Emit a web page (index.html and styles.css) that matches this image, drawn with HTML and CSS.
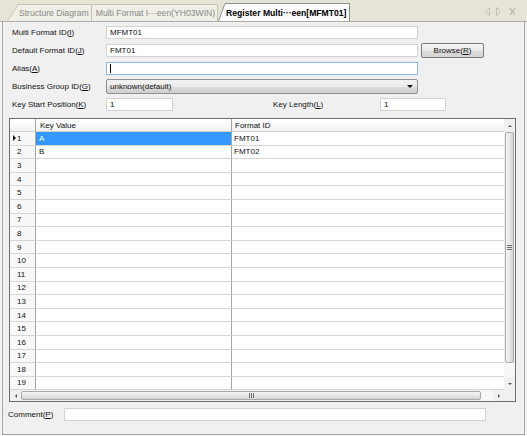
FILE: index.html
```html
<!DOCTYPE html>
<html>
<head>
<meta charset="utf-8">
<link rel="stylesheet" href="styles.css">
</head>
<body>
<div class="window">
  <div class="tabbar">
    <div class="tabs">
      <div class="tab">
        <svg class="slant" width="11" height="17" viewBox="0 0 11 17"><polygon points="0,17 11,0 11,17" fill="#efeee7"/><line x1="0.5" y1="17" x2="11" y2="0.5" stroke="#c4c2b6" stroke-width="1"/></svg>
        <div class="tab-body tab-first">Structure Diagram</div>
      </div>
      <div class="tab">
        <div class="tab-body tab-second">Multi Format I···een(YH03WIN)</div>
      </div>
      <div class="tab tab-active">
        <svg class="slant" width="7" height="18" viewBox="0 0 7 18"><polygon points="0,18 7,0 7,18" fill="#fbfbfb"/><line x1="0.5" y1="18" x2="7" y2="0.5" stroke="#8f8f8f" stroke-width="1"/></svg>
        <div class="tab-body">Register Multi···een[MFMT01]</div>
      </div>
    </div>
    <div class="tabctl">
      <svg width="34" height="11" viewBox="0 0 34 11">
        <polygon points="5.5,1.5 1.5,5.5 5.5,9.5" fill="none" stroke="#c2c0b6" stroke-width="1"/>
        <polygon points="12.5,1.5 16.5,5.5 12.5,9.5" fill="none" stroke="#c2c0b6" stroke-width="1"/>
        <line x1="26" y1="2" x2="31" y2="9" stroke="#b4b2a8" stroke-width="1.1"/>
        <line x1="31" y1="2" x2="26" y2="9" stroke="#b4b2a8" stroke-width="1.1"/>
      </svg>
    </div>
  </div>

  <div class="panel">
    <div class="form">
      <div class="row">
        <div class="label">Multi Format ID(<u>I</u>)</div>
        <div class="input wide">MFMT01</div>
      </div>
      <div class="row">
        <div class="label">Default Format ID(<u>J</u>)</div>
        <div class="input wide">FMT01</div>
        <div class="button">Browse(<u>R</u>)</div>
      </div>
      <div class="row">
        <div class="label">Alias(<u>A</u>)</div>
        <div class="input wide focused"><span class="caret"></span></div>
      </div>
      <div class="row">
        <div class="label">Business Group ID(<u>G</u>)</div>
        <div class="combo">
          <span>unknown(default)</span>
          <span class="combo-arrow"></span>
        </div>
      </div>
      <div class="row">
        <div class="label">Key Start Position(<u>K</u>)</div>
        <div class="input short">1</div>
        <div class="label label2">Key Length(<u>L</u>)</div>
        <div class="input short2">1</div>
      </div>
    </div>

    <div class="grid">
      <div class="grid-main">
        <div class="grow ghead">
          <div class="cell rh"></div>
          <div class="cell c1">Key Value</div>
          <div class="cell c2">Format ID</div>
        </div>
        <div class="grow">
          <div class="cell rh current">1</div>
          <div class="cell c1 selected">A</div>
          <div class="cell c2">FMT01</div>
        </div>
        <div class="grow">
          <div class="cell rh">2</div>
          <div class="cell c1">B</div>
          <div class="cell c2">FMT02</div>
        </div>
        <div class="grow"><div class="cell rh">3</div><div class="cell c1"></div><div class="cell c2"></div></div>
        <div class="grow"><div class="cell rh">4</div><div class="cell c1"></div><div class="cell c2"></div></div>
        <div class="grow"><div class="cell rh">5</div><div class="cell c1"></div><div class="cell c2"></div></div>
        <div class="grow"><div class="cell rh">6</div><div class="cell c1"></div><div class="cell c2"></div></div>
        <div class="grow"><div class="cell rh">7</div><div class="cell c1"></div><div class="cell c2"></div></div>
        <div class="grow"><div class="cell rh">8</div><div class="cell c1"></div><div class="cell c2"></div></div>
        <div class="grow"><div class="cell rh">9</div><div class="cell c1"></div><div class="cell c2"></div></div>
        <div class="grow"><div class="cell rh">10</div><div class="cell c1"></div><div class="cell c2"></div></div>
        <div class="grow"><div class="cell rh">11</div><div class="cell c1"></div><div class="cell c2"></div></div>
        <div class="grow"><div class="cell rh">12</div><div class="cell c1"></div><div class="cell c2"></div></div>
        <div class="grow"><div class="cell rh">13</div><div class="cell c1"></div><div class="cell c2"></div></div>
        <div class="grow"><div class="cell rh">14</div><div class="cell c1"></div><div class="cell c2"></div></div>
        <div class="grow"><div class="cell rh">15</div><div class="cell c1"></div><div class="cell c2"></div></div>
        <div class="grow"><div class="cell rh">16</div><div class="cell c1"></div><div class="cell c2"></div></div>
        <div class="grow"><div class="cell rh">17</div><div class="cell c1"></div><div class="cell c2"></div></div>
        <div class="grow"><div class="cell rh">18</div><div class="cell c1"></div><div class="cell c2"></div></div>
        <div class="grow"><div class="cell rh">19</div><div class="cell c1"></div><div class="cell c2"></div></div>
      </div>
      <div class="vscroll">
        <div class="sbtn"><span class="tri tri-up"></span></div>
        <div class="vthumb"><span class="vgrip"></span></div>
        <div class="vtrack"></div>
        <div class="sbtn"><span class="tri tri-down"></span></div>
      </div>
      <div class="hscroll">
        <div class="sbtn hbtn"><span class="tri tri-left"></span></div>
        <div class="hthumb"><span class="hgrip"></span></div>
        <div class="htrack"></div>
        <div class="sbtn hbtn"><span class="tri tri-right"></span></div>
      </div>
      <div class="corner"></div>
    </div>

    <div class="crow">
      <div class="clabel">Comment(<u>P</u>)</div>
      <div class="input comment"></div>
    </div>
  </div>
</div>
</body>
</html>
```

FILE: styles.css
```css
* { box-sizing: border-box; }
html, body { margin: 0; padding: 0; }
body {
  width: 527px;
  height: 436px;
  overflow: hidden;
  background: #f4f4f4;
  font-family: "Liberation Sans", Arial, sans-serif;
  font-size: 8px;
  color: #111;
}
u { text-decoration: underline; text-underline-offset: 1px; }

.window {
  width: 527px;
  height: 436px;
  display: flex;
  flex-direction: column;
}

/* ---------- tab bar ---------- */
.tabbar {
  flex: none;
  height: 22px;
  background: #e6e4d7;
  border-bottom: 1px solid #b0aea4;
  display: flex;
  align-items: flex-end;
  justify-content: space-between;
  padding-left: 7px;
}
.tabs { display: flex; align-items: flex-end; }
.tab { display: flex; align-items: stretch; height: 17px; }
.slant { display: block; flex: none; }
.tab-body {
  display: flex;
  align-items: center;
  border-top: 1px solid #c4c2b6;
  border-right: 1px solid #c4c2b6;
  background: #efeee7;
  color: #8a8a86;
  font-size: 8.6px;
  padding: 0 2px 0 1px;
  white-space: nowrap;
}
.tab-second { padding-left: 4px; padding-right: 2px; }
.tab-active { height: 18px; }
.tab-active .tab-body {
  background: #fbfbfb;
  color: #000;
  font-weight: bold;
  border-color: #8f8f8f;
  padding: 0 3px 0 1px;
}
.tabctl { align-self: center; padding-right: 9px; padding-top: 1px; }
.tabctl svg { display: block; }

/* ---------- panel ---------- */
.panel {
  flex: 1;
  margin: 0 2px 1px 2px;
  border: 1px solid #a3a3a3;
  border-top: none;
  background: #f0f0f0;
  padding: 1px 0 0 5px;
  display: flex;
  flex-direction: column;
}

.form { display: flex; flex-direction: column; }
.row {
  display: flex;
  align-items: center;
  height: 18px;
  padding-left: 4px;
}
.label { width: 94px; flex: none; white-space: nowrap; }
.label2 { width: 107px; margin-left: 100px; }

.input {
  height: 13px;
  background: #fff;
  border: 1px solid #d3d3d3;
  padding-left: 3px;
  display: flex;
  align-items: center;
  flex: none;
}
.wide { width: 312px; }
.short { width: 67px; }
.short2 { width: 66px; }
.focused { border-color: #8db8e2; }
.caret { width: 1px; height: 9px; background: #000; }

.button {
  margin-left: 3px;
  width: 63px;
  height: 15px;
  border: 1px solid #7a7a7a;
  border-radius: 2px;
  background: linear-gradient(#f6f6f6, #e8e8e8 50%, #dcdcdc 51%, #d4d4d4);
  display: flex;
  align-items: center;
  justify-content: center;
  flex: none;
}

.combo {
  width: 312px;
  height: 15px;
  border: 1px solid #8e8f8f;
  border-radius: 2px;
  background: linear-gradient(#f3f3f3, #ebebeb 50%, #dddddd 51%, #cfcfcf);
  display: flex;
  align-items: center;
  justify-content: space-between;
  padding: 0 4px 0 3px;
  flex: none;
}
.combo-arrow {
  width: 0; height: 0;
  border-left: 3px solid transparent;
  border-right: 3px solid transparent;
  border-top: 3px solid #111;
}

/* ---------- grid ---------- */
.grid {
  margin-top: 5px;
  margin-left: 1px;
  width: 507px;
  display: grid;
  grid-template-columns: 494px 11px;
  grid-template-rows: 271px 11px;
  border: 1px solid #6e6e6e;
  background: #fff;
}
.grid-main { overflow: hidden; }
.grow {
  display: grid;
  grid-template-columns: 26px 196px 272px;
  height: 13.6px;
}
.ghead { height: 13px; }
.cell {
  border-bottom: 1px solid #d6d6d6;
  display: flex;
  align-items: center;
  white-space: nowrap;
  overflow: hidden;
}
.rh {
  background: #f8f8f8;
  border-right: 1px solid #a5a5a5;
  padding-left: 7px;
  position: relative;
}
.c1 { border-right: 1px solid #a5a5a5; padding-left: 3px; }
.c2 { padding-left: 2px; }
.ghead .cell {
  background: linear-gradient(#ffffff, #f2f2f2);
  border-bottom-color: #d0d0d0;
}
.ghead .c1 { padding-left: 4px; }
.ghead .c2 { padding-left: 3px; }
.selected { background: #3399ff; color: #fff; }
.current::before {
  content: "";
  position: absolute;
  left: 3px;
  top: 50%;
  margin-top: -3px;
  border-top: 3px solid transparent;
  border-bottom: 3px solid transparent;
  border-left: 3px solid #111;
}

/* scrollbars */
.vscroll {
  display: flex;
  flex-direction: column;
  background: #f0f0f0;
}
.sbtn {
  height: 13px;
  flex: none;
  display: flex;
  align-items: center;
  justify-content: center;
  background: #f0f0f0;
}
.vthumb {
  height: 231px;
  flex: none;
  margin: 0 1px 0 1px;
  border: 1px solid #a9a9a9;
  border-radius: 2px;
  background: linear-gradient(to right, #f6f6f6, #e6e6e6 55%, #d4d4d4);
  display: flex;
  align-items: center;
  justify-content: center;
}
.vgrip {
  width: 5px;
  height: 5px;
  background: repeating-linear-gradient(#6f6f6f 0 1px, transparent 1px 2px);
}
.vtrack { flex: 1; background: #f7f7f7; }

.hscroll {
  display: flex;
  background: #f0f0f0;
}
.hbtn { width: 11px; height: 11px; }
.hthumb {
  width: 460px;
  flex: none;
  margin: 1px 0;
  border: 1px solid #a9a9a9;
  border-radius: 2px;
  background: linear-gradient(#f6f6f6, #e6e6e6 55%, #d4d4d4);
  display: flex;
  align-items: center;
  justify-content: center;
}
.hgrip {
  width: 5px;
  height: 5px;
  background: repeating-linear-gradient(to right, #6f6f6f 0 1px, transparent 1px 2px);
}
.htrack { flex: 1; background: #f7f7f7; }
.corner { background: #f0f0f0; }

.tri { width: 0; height: 0; display: block; }
.tri-up { border-left: 2px solid transparent; border-right: 2px solid transparent; border-bottom: 2px solid #555; }
.tri-down { border-left: 2px solid transparent; border-right: 2px solid transparent; border-top: 2px solid #555; }
.tri-left { border-top: 2px solid transparent; border-bottom: 2px solid transparent; border-right: 2px solid #555; }
.tri-right { border-top: 2px solid transparent; border-bottom: 2px solid transparent; border-left: 2px solid #555; }

/* comment */
.crow {
  display: flex;
  align-items: center;
  height: 18px;
  margin-top: 3px;
}
.clabel { width: 56px; flex: none; }
.comment { width: 422px; }
```
